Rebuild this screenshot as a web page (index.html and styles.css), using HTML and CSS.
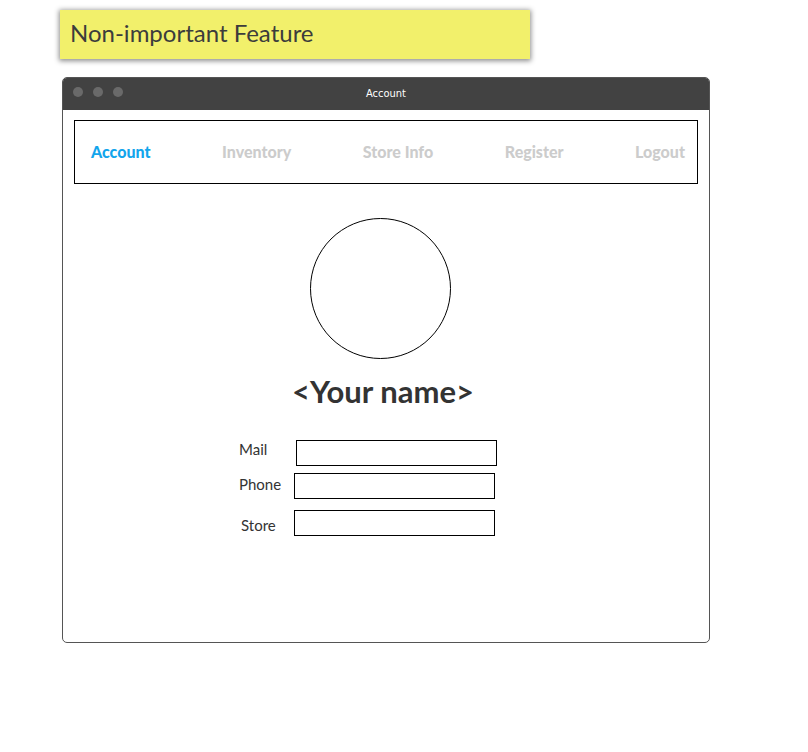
FILE: index.html
```html
<!DOCTYPE html>
<html>
<head>
<meta charset="utf-8">
<link rel="stylesheet" href="styles.css">
</head>
<body>
<div class="note">Non-important Feature</div>
<div class="window">
  <div class="titlebar">
    <div class="dots"><span class="dot"></span><span class="dot"></span><span class="dot"></span></div>
    <div class="title">Account</div>
  </div>
  <div class="content">
    <nav class="nav">
      <span class="nav-item active">Account</span>
      <span class="nav-item">Inventory</span>
      <span class="nav-item">Store Info</span>
      <span class="nav-item">Register</span>
      <span class="nav-item">Logout</span>
    </nav>
    <div class="avatar"></div>
    <div class="name">&lt;Your name&gt;</div>
    <div class="form">
      <div class="row row-mail"><span class="label">Mail</span><span class="field"></span></div>
      <div class="row row-phone"><span class="label">Phone</span><span class="field"></span></div>
      <div class="row row-store"><span class="label">Store</span><span class="field"></span></div>
    </div>
  </div>
</div>
</body>
</html>
```
FILE: styles.css
```css
* { box-sizing: border-box; }
body {
  margin: 0;
  background: #fff;
  font-family: Lato, "Open Sans", sans-serif;
  color: #333;
}
.note {
  margin: 10px 0 0 60px;
  width: 470px;
  height: 49px;
  background: #f2f06b;
  box-shadow: 0 1px 5px 1px rgba(0,0,0,0.45);
  color: #3c3c3c;
  font-size: 24px;
  line-height: 45px;
  padding-left: 10px;
}
.window {
  margin: 18px 0 0 62px;
  width: 648px;
  height: 566px;
  border: 1px solid #555;
  border-radius: 5px;
  overflow: hidden;
  display: flex;
  flex-direction: column;
}
.titlebar {
  position: relative;
  height: 32px;
  background: #424242;
  display: flex;
  align-items: center;
  justify-content: center;
  flex: none;
  padding-bottom: 2px;
}
.dots {
  position: absolute;
  left: 10px;
  top: 9px;
  display: flex;
  gap: 10px;
}
.dot {
  width: 10px;
  height: 10px;
  border-radius: 50%;
  background: #6a6a6a;
}
.title {
  color: #fff;
  font-size: 11px;
  font-family: "DejaVu Sans Condensed", "DejaVu Sans", sans-serif;
}
.content {
  flex: 1;
  display: flex;
  flex-direction: column;
  padding: 10px 11px 0 11px;
}
.nav {
  height: 64px;
  border: 1px solid #000;
  display: flex;
  align-items: center;
  justify-content: space-between;
  padding: 0 12px 2px 16px;
}
.nav-item {
  font-weight: 900;
  font-size: 16px;
  color: #cccccc;
}
.nav-item.active { color: #12a5ec; }
.avatar {
  width: 141px;
  height: 141px;
  border: 1px solid #000;
  border-radius: 50%;
  margin: 34px 0 0 236px;
}
.name {
  font-weight: bold;
  font-size: 31px;
  color: #333;
  margin: 14px 0 0 218px;
  line-height: 36px;
}
.form {
  display: flex;
  flex-direction: column;
  margin-top: 31px;
}
.row {
  display: flex;
  align-items: center;
  font-size: 15px;
}
.label {
  color: #333;
}
.field {
  width: 201px;
  height: 26px;
  border: 1px solid #000;
}
.row-mail { margin-left: 165px; }
.row-mail .label { width: 57px; margin-top: -8px; }
.row-phone { margin-left: 165px; margin-top: 7px; }
.row-phone .label { width: 55px; margin-top: -4px; }
.row-store { margin-left: 167px; margin-top: 11px; }
.row-store .label { width: 53px; margin-top: 3px; }
```
